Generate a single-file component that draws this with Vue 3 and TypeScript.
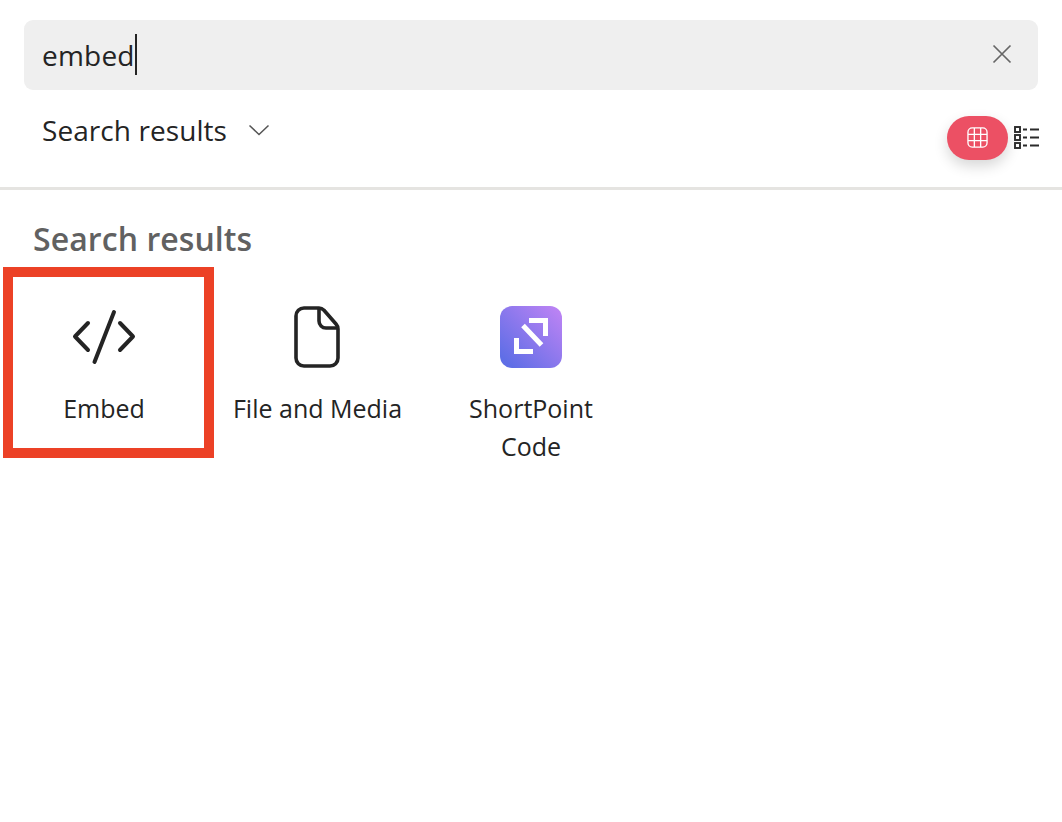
<script setup lang="ts">
interface Tile { label: string; kind: 'embed' | 'file' | 'sp' }
const tiles: Tile[] = [
  { label: 'Embed', kind: 'embed' },
  { label: 'File and Media', kind: 'file' },
  { label: 'ShortPoint Code', kind: 'sp' },
]
</script>

<template>
  <div class="page">
    <div class="search">
      <span class="query">embed</span><span class="caret"></span>
      <svg class="clear" width="22" height="22" viewBox="0 0 22 22" fill="none" stroke="#666" stroke-width="1.7">
        <path d="M2.5 2.5 19.5 19.5M19.5 2.5 2.5 19.5" />
      </svg>
    </div>
    <div class="toolbar">
      <div class="scope">
        <span>Search results</span>
        <svg width="22" height="12" viewBox="0 0 22 12" fill="none" stroke="#555" stroke-width="1.5">
          <path d="M1.5 1.5 11 10.5 20.5 1.5" />
        </svg>
      </div>
      <div class="views">
        <button class="pill" type="button" aria-label="Grid view">
          <svg width="21" height="21" viewBox="0 0 22 22" fill="none" stroke="#fff" stroke-width="1.4">
            <rect x="1" y="1" width="20" height="20" rx="4.5" />
            <path d="M7.7 1v20M14.3 1v20M1 7.7h20M1 14.3h20" />
          </svg>
        </button>
        <svg class="list" width="26" height="24" viewBox="0 0 26 24" fill="none" stroke="#2b2b2b" stroke-width="1.9">
          <rect x="1" y="1" width="5" height="5" />
          <rect x="1" y="9" width="5" height="5" />
          <rect x="1" y="17" width="5" height="5" />
          <path d="M9 3.500h4M16 3.500h9M9 11.500h4M16 11.500h9M9 19.500h4M16 19.500h9" />
        </svg>
      </div>
    </div>
    <h2 class="heading">Search results</h2>
    <div class="grid">
      <div v-for="t in tiles" :key="t.label" class="tile">
        <div class="icon">
          <svg v-if="t.kind === 'embed'" width="64" height="56" viewBox="0 0 64 56" fill="none" stroke="#242424" stroke-width="4" stroke-linecap="round" stroke-linejoin="round">
            <path d="M16 14 3 27.500 16 41M48 14 61 27.500 48 41M42 3 22.500 53" />
          </svg>
          <svg v-else-if="t.kind === 'file'" class="file" width="46" height="62" viewBox="0 0 46 62" fill="none" stroke="#242424" stroke-width="3.600" stroke-linejoin="round">
            <path d="M10 2h15c2 0 3.500.7 5 2.200L42 18c1.300 1.500 2 3 2 5v29a8 8 0 0 1-8 8H10a8 8 0 0 1-8-8V10a8 8 0 0 1 8-8Z" />
            <path d="M25 2.500V15a7 7 0 0 0 7 7h12" />
          </svg>
          <svg v-else width="62" height="62" viewBox="0 0 62 62">
            <defs>
              <linearGradient id="spg" x1="0.1" y1="0.9" x2="0.95" y2="0.05">
                <stop offset="0" stop-color="#5f6ee6" />
                <stop offset="1" stop-color="#bc83f4" />
              </linearGradient>
            </defs>
            <rect width="62" height="62" rx="12" fill="url(#spg)" />
            <path d="M29 14.500H45.500V30M16.500 32V45.500H33M23 19.500 41.500 39" fill="none" stroke="#fff" stroke-width="5" />
          </svg>
        </div>
        <div class="label">{{ t.label }}</div>
        <div v-if="t.kind === 'embed'" class="mark"></div>
      </div>
    </div>
  </div>
</template>

<style>
html, body { background: #fff; }
</style>

<style scoped>
.page {
  width: 1062px;
  height: 822px;
  overflow: hidden;
  box-sizing: border-box;
  padding-top: 20px;
  background: #fff;
  font-family: "Open Sans", "Noto Sans", sans-serif;
  color: #242424;
}
.search {
  margin: 0 24px;
  height: 70px;
  box-sizing: border-box;
  padding: 0 25px 0 18px;
  border-radius: 9px;
  background: #efefef;
  display: flex;
  align-items: center;
}
.query { font-size: 28px; letter-spacing: 0.2px; }
.caret { width: 2px; height: 41px; margin-top: -1px; background: #242424; }
.clear { margin-left: auto; margin-top: -2px; }
.toolbar {
  height: 100px;
  box-sizing: border-box;
  padding: 0 22px 0 42px;
  display: flex;
  justify-content: space-between;
  border-bottom: 3px solid #e5e4e1;
}
.scope {
  display: flex;
  align-items: center;
  gap: 21px;
  height: 80px;
  font-size: 28px;
  letter-spacing: 0.07px;
}
.views { display: flex; align-items: flex-start; gap: 6px; padding-top: 26px; }
.pill {
  width: 61px;
  height: 44px;
  padding: 0 1px 2px 0;
  border: 0;
  border-radius: 22px;
  background: #ec5064;
  box-shadow: 0 6px 14px rgba(0, 0, 0, 0.16);
  display: flex;
  align-items: center;
  justify-content: center;
}
.list { margin-top: 10px; }
.heading {
  margin: 28px 0 0 33px;
  font-size: 32px;
  line-height: 42px;
  font-weight: 600;
  letter-spacing: 0.07px;
  color: #616161;
}
.grid {
  display: grid;
  grid-template-columns: repeat(3, 180px);
  column-gap: 33.500px;
  padding-left: 14px;
  margin-top: 38px;
}
.tile { position: relative; text-align: center; }
.icon { height: 64px; display: flex; align-items: center; justify-content: center; margin-top: 7px; }
.file { margin: -1px 2px 0 0; }
.label {
  margin-top: 20px;
  font-size: 25px;
  line-height: 38px;
}
.mark {
  position: absolute;
  left: -11px;
  top: -31px;
  width: 211px;
  height: 191px;
  box-sizing: border-box;
  border: 10px solid #ec4126;
}
</style>
